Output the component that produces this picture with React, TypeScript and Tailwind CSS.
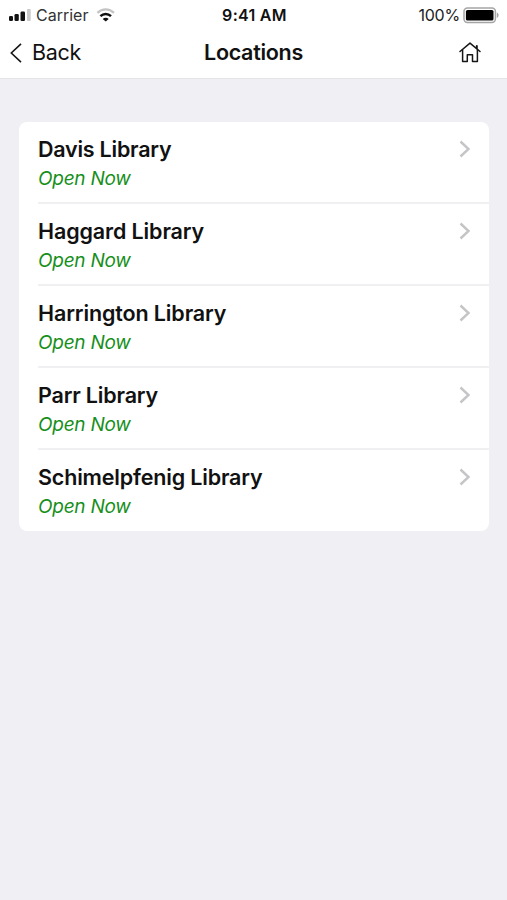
const libraries = [
  { name: 'Davis Library', tracking: 'tracking-[-0.23px]' },
  { name: 'Haggard Library', tracking: 'tracking-[-0.12px]' },
  { name: 'Harrington Library', tracking: 'tracking-[-0.12px]' },
  { name: 'Parr Library', tracking: 'tracking-[-0.18px]' },
  { name: 'Schimelpfenig Library', tracking: 'tracking-[-0.17px]' },
];

function Signal() {
  return (
    <svg width="22" height="13" viewBox="0 0 22 13" className="shrink-0">
      <rect x="0" y="7" width="4" height="5" rx="1.3" fill="#111" />
      <rect x="5.5" y="5" width="4.3" height="7" rx="1.3" fill="#111" />
      <rect x="11.5" y="2.5" width="4.5" height="9.5" rx="1.3" fill="#111" />
      <rect x="18" y="0" width="3.7" height="12" rx="1" fill="#c9c9c9" />
    </svg>
  );
}

function Wifi() {
  return (
    <svg width="20" height="14" viewBox="0 0 20 14" className="shrink-0" fill="none">
      <path d="M1.4 4.9C6.2.2 13.2.2 18 4.9" stroke="#c4c4c4" strokeWidth="2.3" />
      <path d="M4.4 8.1c3-2.9 7.6-2.9 10.6 0" stroke="#111" strokeWidth="2.4" />
      <path d="M6.7 10.9c1.7-1.6 4.3-1.6 6 0L9.7 13.5z" fill="#111" />
    </svg>
  );
}

function Battery() {
  return (
    <svg width="37" height="17" viewBox="0 0 37 17" className="shrink-0" fill="none">
      <rect x="1" y="1" width="31.4" height="14.4" rx="3.4" stroke="#a5a5a5" strokeWidth="1.5" />
      <rect x="2.9" y="2.9" width="27.6" height="10.6" rx="1.6" fill="#000" />
      <path d="M33.8 5.5c2.4.8 2.4 4.6 0 5.4z" fill="#a5a5a5" />
    </svg>
  );
}

function Home() {
  return (
    <svg width="22" height="22" viewBox="0 0 22 22" className="shrink-0" fill="none" stroke="#161616" strokeWidth="1.5" strokeLinejoin="round" strokeLinecap="round">
      <path d="M1 9.5 11 1.1l10 8.4" />
      <path d="M17.8 6.3V3.9" strokeWidth="2" />
      <path d="M3.6 8v11.4h4.7v-6.6h5.2v6.6h4.9V8" />
    </svg>
  );
}

export default function App() {
  return (
    <div className="flex h-[900px] w-[507px] flex-col overflow-hidden bg-[#efeff4] font-[Inter,'Liberation_Sans',sans-serif] text-[#111]">
      <header className="h-[79px] shrink-0 border-b border-[#e5e5e8] bg-white">
        <div className="grid h-[30px] grid-cols-3 items-center pr-[7px] pl-[9px] text-[16px] leading-none">
          <div className="flex items-center text-[#333]">
            <Signal />
            <span className="ml-[5px]">Carrier</span>
            <span className="ml-2"><Wifi /></span>
          </div>
          <span className="text-center font-semibold tracking-[0.3px]">9:41 AM</span>
          <div className="flex items-center justify-end gap-[3px] text-[#222]">
            <span className="tracking-[-0.2px]">100%</span>
            <Battery />
          </div>
        </div>
        <div className="grid h-[46px] grid-cols-3 items-center px-[10px] leading-none">
          <div className="flex items-center text-[21.5px]">
            <svg width="12" height="20" viewBox="0 0 12 20" fill="none" stroke="#161616" strokeWidth="1.6" className="-mt-px">
              <path d="M11 .8 1.3 10 11 19.2" />
            </svg>
            <span className="ml-[10px] tracking-[-0.3px]">Back</span>
          </div>
          <h1 className="text-center text-[21.5px] font-semibold tracking-[-0.3px]">Locations</h1>
          <div className="flex justify-end pr-4"><Home /></div>
        </div>
      </header>
      <main className="pt-[43px] pr-[18px] pl-[19px]">
        <ul className="overflow-hidden rounded-[8px] bg-white pl-[19px]">
          {libraries.map((library, i) => (
            <li key={library.name} className={`flex justify-between pr-[18px] ${i < libraries.length - 1 ? 'h-[82px] border-b-2 border-[#f0f0f2]' : 'h-[81px]'}`}>
              <div className="pt-[13px]">
                <h2 className={`text-[21.5px] leading-[28px] font-semibold ${library.tracking}`}>{library.name}</h2>
                <p className="mt-[3px] text-[19px] leading-[26px] tracking-[-0.25px] text-[#168f1b] italic">Open Now</p>
              </div>
              <svg width="12" height="18" viewBox="0 0 12 18" className="mt-[18px]" fill="none" stroke="#c5c5c8" strokeWidth="2.4">
                <path d="M1.5 1.5 9.5 9l-8 7.5" />
              </svg>
            </li>
          ))}
        </ul>
      </main>
    </div>
  );
}
